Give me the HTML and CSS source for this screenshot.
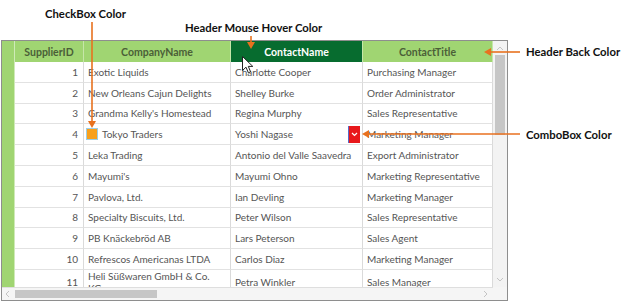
FILE: index.html
```html
<!DOCTYPE html>
<html lang="en">
<head>
  <meta charset="UTF-8">
  <title>Grid Styling</title>
  <link rel="stylesheet" href="styles.css">
</head>
<body>
  <div class="stage">
    <div class="grid">
      <div class="viewport">
        <div class="table">
          <div class="row head">
            <div class="rh"></div>
            <div class="hc">SupplierID</div>
            <div class="hc">CompanyName</div>
            <div class="hc hover">ContactName</div>
            <div class="hc">ContactTitle</div>
          </div>
          <div class="row"><div class="rh"></div><div class="c num">1</div><div class="c">Exotic Liquids</div><div class="c">Charlotte Cooper</div><div class="c">Purchasing Manager</div></div>
          <div class="row"><div class="rh"></div><div class="c num">2</div><div class="c">New Orleans Cajun Delights</div><div class="c">Shelley Burke</div><div class="c">Order Administrator</div></div>
          <div class="row"><div class="rh"></div><div class="c num">3</div><div class="c">Grandma Kelly's Homestead</div><div class="c">Regina Murphy</div><div class="c">Sales Representative</div></div>
          <div class="row"><div class="rh"></div><div class="c num">4</div><div class="c"><span class="check"></span>Tokyo Traders</div><div class="c combo">Yoshi Nagase<span class="drop"><svg width="7" height="5" viewBox="0 0 7 5"><path d="M1 1l2.5 2.5L6 1" fill="none" stroke="#fff" stroke-width="1.2"/></svg></span></div><div class="c">Marketing Manager</div></div>
          <div class="row"><div class="rh"></div><div class="c num">5</div><div class="c">Leka Trading</div><div class="c">Antonio del Valle Saavedra</div><div class="c">Export Administrator</div></div>
          <div class="row"><div class="rh"></div><div class="c num">6</div><div class="c">Mayumi's</div><div class="c">Mayumi Ohno</div><div class="c">Marketing Representative</div></div>
          <div class="row"><div class="rh"></div><div class="c num">7</div><div class="c">Pavlova, Ltd.</div><div class="c">Ian Devling</div><div class="c">Marketing Manager</div></div>
          <div class="row"><div class="rh"></div><div class="c num">8</div><div class="c">Specialty Biscuits, Ltd.</div><div class="c">Peter Wilson</div><div class="c">Sales Representative</div></div>
          <div class="row"><div class="rh"></div><div class="c num">9</div><div class="c">PB Knäckebröd AB</div><div class="c">Lars Peterson</div><div class="c">Sales Agent</div></div>
          <div class="row"><div class="rh"></div><div class="c num">10</div><div class="c">Refrescos Americanas LTDA</div><div class="c">Carlos Diaz</div><div class="c">Marketing Manager</div></div>
          <div class="row"><div class="rh"></div><div class="c num">11</div><div class="c wrap"><span>Heli Süßwaren GmbH &amp; Co. KG</span></div><div class="c">Petra Winkler</div><div class="c">Sales Manager</div></div>
        </div>
        <div class="vscroll">
          <svg class="arr" width="14" height="10" viewBox="0 0 14 10"><path d="M4 6l3-3 3 3" fill="none" stroke="#c4c4c4" stroke-width="1"/></svg>
          <div class="vthumb"></div>
          <svg class="arr down" width="14" height="10" viewBox="0 0 14 10"><path d="M4 4l3 3 3-3" fill="none" stroke="#c4c4c4" stroke-width="1"/></svg>
        </div>
        <div class="hscroll">
          <svg class="arr" width="10" height="12" viewBox="0 0 10 12"><path d="M6 3L3 6l3 3" fill="none" stroke="#c4c4c4" stroke-width="1"/></svg>
          <div class="hthumb"></div>
          <svg class="arr right" width="10" height="12" viewBox="0 0 10 12"><path d="M4 3l3 3-3 3" fill="none" stroke="#c4c4c4" stroke-width="1"/></svg>
        </div>
        <div class="corner"></div>
      </div>
    </div>

    <!-- callouts drawn over the grid -->
    <div class="label l-check">CheckBox Color</div>
    <div class="label l-hover">Header Mouse Hover Color</div>
    <div class="label l-back">Header Back Color</div>
    <div class="label l-combo">ComboBox Color</div>
    <svg class="arrows" width="624" height="302" viewBox="0 0 624 302">
      <g stroke="#e8711f" stroke-width="1.6" fill="none">
        <path d="M92 22V122"/>
        <path d="M251 36V43"/>
        <path d="M520 52H490"/>
        <path d="M520 134H368"/>
      </g>
      <g fill="#e8711f">
        <path d="M88 121h8l-4 7z"/>
        <path d="M247 42h8l-4 7z"/>
        <path d="M491 48v8l-7-4z"/>
        <path d="M369 130v8l-7-4z"/>
      </g>
    </svg>
    <svg class="cursor" width="12" height="18" viewBox="0 0 12 18">
      <path d="M0.5 0.5V14.5L4 11.2L6.4 16.8L8.6 15.8L6.3 10.4H10.8Z" fill="#fff" stroke="#222" stroke-width="1"/>
    </svg>
  </div>
</body>
</html>
```

FILE: styles.css
```css
body {
  margin: 0;
  background-color: #ffffff;
  font-family: 'Lato', 'Open Sans', sans-serif;
}

.stage {
  position: relative;
  width: 624px;
  height: 302px;
  overflow: hidden;
  padding-top: 40px;
  box-sizing: border-box;
}

.grid {
  margin-left: 1px;
  width: 507px;
  height: 261px;
  border: 1px solid #8e8e8e;
  box-sizing: border-box;
  background-color: #ffffff;
}

.viewport {
  display: grid;
  grid-template-columns: 491px 14px;
  grid-template-rows: 246px 13px;
  height: 100%;
}

.table {
  overflow: hidden;
}

.row {
  display: grid;
  grid-template-columns: 13px 69px 147px 132px 130px;
  height: 20.8px;
}

.row.head {
  height: 21px;
}

.rh {
  background-color: #a0d572;
  border-right: 1px solid #cfeab8;
}

.hc {
  background-color: #a0d572;
  color: #4b5f38;
  font-weight: bold;
  font-size: 10.5px;
  display: flex;
  align-items: center;
  justify-content: center;
  border-right: 1px solid #c6e6a9;
}

.hc.hover {
  background-color: #076c2f;
  color: #ffffff;
}

.c {
  color: #555555;
  font-size: 10px;
  display: flex;
  align-items: center;
  padding: 0 4px;
  white-space: nowrap;
  overflow: hidden;
  border-right: 1px solid #dadada;
  border-bottom: 1px solid #e2e2e2;
}

.c.num {
  justify-content: flex-end;
  padding-right: 5px;
}

.c.wrap {
  white-space: normal;
  line-height: 12px;
  overflow: visible;
}

.c.wrap span {
  max-width: 124px;
}

.check {
  display: inline-block;
  width: 10px;
  height: 10px;
  background-color: #f8a01c;
  border: 1px solid #9ccde6;
  margin: 0 4px 0 -2px;
}

.combo {
  justify-content: space-between;
  padding-right: 2px;
}

.drop {
  display: flex;
  align-items: center;
  justify-content: center;
  width: 11px;
  height: 17px;
  background-color: #e8181b;
  border-left: 1px solid #5a6ac8;
}

.vscroll {
  grid-row: 1;
  grid-column: 2;
  background-color: #f3f3f3;
  display: flex;
  flex-direction: column;
  align-items: center;
}

.vscroll .arr {
  margin-top: 3px;
}

.vthumb {
  width: 10px;
  height: 80px;
  margin-top: 1px;
  background-color: #c6c6c6;
}

.vscroll .down {
  margin-top: auto;
  margin-bottom: 3px;
}

.hscroll {
  grid-row: 2;
  grid-column: 1;
  background-color: #f5f5f5;
  border-top: 1px solid #dedede;
  display: flex;
  align-items: center;
}

.hscroll .arr {
  margin-left: 1px;
}

.hthumb {
  width: 142px;
  height: 8px;
  margin-left: 2px;
  background-color: #c6c6c6;
}

.hscroll .right {
  margin-left: auto;
  margin-right: 3px;
}

.corner {
  grid-row: 2;
  grid-column: 2;
  background-color: #f5f5f5;
}

.label {
  position: absolute;
  font-weight: bold;
  font-size: 11.3px;
  color: #111111;
  line-height: 14px;
  white-space: nowrap;
}

.l-check { left: 45px; top: 7px; }
.l-hover { left: 185px; top: 21px; }
.l-back { left: 526px; top: 45px; }
.l-combo { left: 526px; top: 128px; }

.arrows {
  position: absolute;
  top: 0;
  left: 0;
  pointer-events: none;
}

.cursor {
  position: absolute;
  left: 242px;
  top: 56px;
}
```
